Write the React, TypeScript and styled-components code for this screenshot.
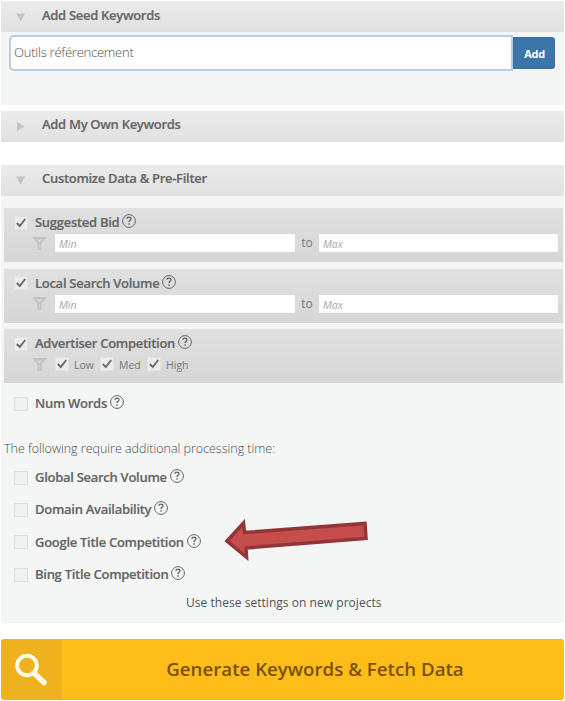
import React from "react";
import styled, { createGlobalStyle } from "styled-components";

const GlobalStyle = createGlobalStyle`
  * { box-sizing: border-box; }
  body { margin: 0; background: #fff; font-family: "Open Sans", sans-serif; color: #666; overflow: hidden; }
`;

const Page = styled.main`
  width: 565px;
  height: 701px;
  padding: 1px 1px 0;
  overflow: hidden;
`;

const Header = styled.header<{ $bottom: number }>`
  height: 31px;
  display: flex;
  align-items: center;
  padding: 0 0 ${(p) => p.$bottom}px 14px;
  background: linear-gradient(#ebebeb, #e1e1e1);
`;

const Caret = styled.svg`
  width: 11px;
  height: 11px;
  margin: 4px 16px 0 0;
  fill: #c4c4c4;
`;

const Title = styled.h2`
  margin: 0;
  font-size: 13px;
  line-height: 18px;
  font-weight: 600;
  letter-spacing: -0.3px;
  -webkit-text-stroke: 0.2px #666;
  color: #666;
`;

const SeedBody = styled.section`
  height: 73px;
  display: flex;
  align-items: flex-start;
  padding: 3px 8px 0;
  margin-bottom: 6px;
  background: #f4f6f6;
`;

const SeedInput = styled.input`
  width: 504px;
  height: 36px;
  padding: 0 3px 2px;
  border: 2px solid #b7cde2;
  border-radius: 5px 0 0 5px;
  outline: none;
  background: #fff;
  font: 300 13px "Open Sans", sans-serif;
  letter-spacing: -0.24px;
  color: #4c4c4c;
`;

const AddButton = styled.button`
  width: 42px;
  height: 32px;
  margin-top: 2px;
  padding: 0 0 0 1px;
  border: 1px solid #386f9f;
  border-radius: 0 3px 3px 0;
  background: #3c76a8;
  color: #fff;
  font: 700 11px "Open Sans", sans-serif;
  letter-spacing: -0.3px;
`;

const Gap = styled.div`
  height: 23px;
`;

const FilterBody = styled.section`
  height: 427px;
  padding: 12px 1px 0 3px;
  background: #f4f6f6;
`;

const Card = styled.div`
  height: 54px;
  margin-bottom: 6.5px;
  padding: 6px 5px 0 10px;
  background: linear-gradient(#e0e0e0, #d6d6d6);
`;

const Row = styled.div<{ $height: number; $indent?: number }>`
  height: ${(p) => p.$height}px;
  padding-left: ${(p) => p.$indent ?? 0}px;
  display: flex;
  align-items: center;
`;

const Box = styled.svg`
  width: 14px;
  height: 14px;
  flex: none;
  margin-right: 7px;
`;

const Label = styled.span`
  font-size: 13px;
  line-height: 17px;
  font-weight: 600;
  letter-spacing: -0.28px;
  -webkit-text-stroke: 0.2px #666;
  color: #666;
  white-space: nowrap;
`;

const HelpIcon = styled.svg`
  width: 14px;
  height: 14px;
  margin: 0 0 3px 3px;
  flex: none;
`;

const FunnelIcon = styled.svg`
  width: 15px;
  height: 15px;
  flex: none;
  margin-right: 8px;
`;

const RangeInput = styled.input<{ $width: number }>`
  width: ${(p) => p.$width}px;
  height: 18px;
  padding: 2px 3px 0;
  border: 1px solid #fafafa;
  background: #fff;
  font: italic 400 10.5px "Open Sans", sans-serif;
  &::placeholder { color: #a7a7a7; opacity: 1; }
`;

const To = styled.span`
  width: 24px;
  text-align: center;
  font-size: 12px;
  line-height: 16px;
  color: #777;
`;

const Option = styled.span<{ $width: number }>`
  width: ${(p) => p.$width}px;
  display: flex;
  align-items: center;
  font-size: 10.5px;
  line-height: 16px;
  padding-top: 1px;
  color: #777;
  white-space: nowrap;

  ${Box} {
    margin: 0 5px 1px 0;
  }
`;

const Loose = styled.div`
  padding-left: 10px;
`;

const Note = styled.p`
  margin: 21px 0 3px;
  height: 20px;
  font-size: 12.5px;
  line-height: 20px;
  font-weight: 300;
  letter-spacing: -0.02px;
  color: #4c4c4c;
`;

const Extra = styled.div`
  position: relative;
  padding-left: 10px;
`;

const Arrow = styled.svg`
  position: absolute;
  left: 219px;
  top: 55px;
  width: 148px;
  height: 44px;
`;

const Settings = styled.p`
  margin: 2px 0 0 182px;
  font-size: 12px;
  line-height: 20px;
  letter-spacing: 0.04px;
  color: #525252;
  white-space: nowrap;
`;

const Generate = styled.button`
  width: 563px;
  height: 61px;
  margin-top: 16px;
  padding: 0;
  display: flex;
  align-items: stretch;
  border: 1px solid #f0b322;
  border-width: 1px 0 1px 1px;
  border-radius: 3px;
  overflow: hidden;
  background: #ffbd1a;
`;

const SearchCell = styled.span`
  width: 60px;
  background: #efb11d;
  display: flex;
`;

const GenerateText = styled.span`
  flex: 1;
  align-self: center;
  padding: 0 0 2px 4px;
  text-align: center;
  font: 600 18.7px/26px "Open Sans", sans-serif;
  color: #7a5000;
`;

const Check = ({ on = false }: { on?: boolean }) => (
  <Box viewBox="0 0 14 14">
    <rect x=".5" y=".5" width="13" height="13" fill={on ? "#ececec" : "#eff0f0"} stroke={on ? "#e2e2e2" : "#dcdede"} />
    {on && <path d="M2.8 7 5.8 10 11.200 3" fill="none" stroke="#6a6a6a" strokeWidth="1.900" />}
  </Box>
);

const Help = () => (
  <HelpIcon viewBox="0 0 14 14">
    <circle cx="7" cy="7" r="6.4" fill="none" stroke="#666" strokeWidth="1" />
    <path d="M4.900 4.700C5 2.700 9 2.600 9 4.700 9 6.200 7 6.200 7 7.900M7 9.200v1.500" fill="none" stroke="#5d5d5d" strokeWidth="1.300" />
  </HelpIcon>
);

const Funnel = () => (
  <FunnelIcon viewBox="0 0 15 15">
    <path d="M0 1h15L9.5 7.5V14h-4V7.5Z" fill="#c2c2c2" />
    <path d="M4.500 3.500h6L7.500 6.500Z" fill="#d9d9d9" />
    <path d="M7.500 8v5" stroke="#cfcfcf" />
  </FunnelIcon>
);

const Section = ({ title, open, bottom = 3 }: { title: string; open: boolean; bottom?: number }) => (
  <Header $bottom={bottom}>
    <Caret viewBox="0 0 11 11">
      <path d={open ? "M1 1.5h9L5.5 9.5Z" : "M2 1 9.5 5.5 2 10Z"} />
    </Caret>
    <Title>{title}</Title>
  </Header>
);

const Field = ({ label, on, height = 17 }: { label: string; on?: boolean; height?: number }) => (
  <Row $height={height}>
    <Check on={on} />
    <Label>{label}</Label>
    <Help />
  </Row>
);

const RangeCard = ({ label }: { label: string }) => (
  <Card>
    <Field label={label} on />
    <Row $height={24} $indent={18}>
      <Funnel />
      <RangeInput placeholder="Min" $width={240} />
      <To>to</To>
      <RangeInput placeholder="Max" $width={239} />
    </Row>
  </Card>
);

const levels = [
  { name: "Low", width: 45 },
  { name: "Med", width: 47 },
  { name: "High", width: 50 },
];

const extras = ["Global Search Volume", "Domain Availability", "Google Title Competition", "Bing Title Competition"];

export default function App() {
  return (
    <>
      <GlobalStyle />
      <Page>
        <Section title="Add Seed Keywords" open />
        <SeedBody>
          <SeedInput defaultValue="Outils référencement" />
          <AddButton>Add</AddButton>
        </SeedBody>
        <Section title="Add My Own Keywords" open={false} bottom={5} />
        <Gap />
        <Section title="Customize Data & Pre-Filter" open bottom={5} />
        <FilterBody>
          <RangeCard label="Suggested Bid" />
          <RangeCard label="Local Search Volume" />
          <Card>
            <Field label="Advertiser Competition" on />
            <Row $height={24} $indent={18}>
              <Funnel />
              {levels.map((l) => (
                <Option key={l.name} $width={l.width}>
                  <Check on />
                  {l.name}
                </Option>
              ))}
            </Row>
          </Card>
          <Loose>
            <Field label="Num Words" height={28} />
          </Loose>
          <Note>The following require additional processing time:</Note>
          <Extra>
            {extras.map((e) => (
              <Field key={e} label={e} height={32.3} />
            ))}
            <Arrow viewBox="0 0 148 44">
              <path d="M4 24 20.500 6l1 9.500L142 6.500l1 15L23 31l.5 9Z" fill="#c54d4b" stroke="#923536" strokeWidth="3.500" />
            </Arrow>
          </Extra>
          <Settings>Use these settings on new projects</Settings>
        </FilterBody>
        <Generate>
          <SearchCell>
            <svg width="60" height="59" viewBox="0 0 60 59" fill="none" stroke="#fffbe9">
              <circle cx="25" cy="25.500" r="9.800" strokeWidth="4" />
              <path d="m33 34 9 8.500" strokeWidth="5.500" strokeLinecap="round" />
            </svg>
          </SearchCell>
          <GenerateText>Generate Keywords &amp; Fetch Data</GenerateText>
        </Generate>
      </Page>
    </>
  );
}
